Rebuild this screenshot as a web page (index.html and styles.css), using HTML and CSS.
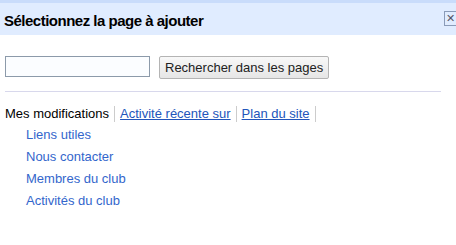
FILE: index.html
```html
<!DOCTYPE html>
<html lang="fr">
<head>
  <meta charset="UTF-8">
  <title>Sélectionnez la page à ajouter</title>
  <link rel="stylesheet" href="styles.css">
</head>
<body>
  <div class="dialog">
    <div class="dialog-header">
      <h2 class="dialog-title">Sélectionnez la page à ajouter</h2>
      <span class="close-button">&#x2715;</span>
    </div>
    <div class="search-row">
      <input type="text" class="search-input">
      <button class="btn">Rechercher dans les pages</button>
    </div>
    <div class="tabs">
      <span class="tab tab-current">Mes modifications</span>
      <a href="#" class="tab">Activité récente sur</a>
      <a href="#" class="tab">Plan du site</a>
    </div>
    <ul class="page-list">
      <li><a href="#">Liens utiles</a></li>
      <li><a href="#">Nous contacter</a></li>
      <li><a href="#">Membres du club</a></li>
      <li><a href="#">Activités du club</a></li>
    </ul>
  </div>
</body>
</html>
```
FILE: styles.css
```css
body {
  margin: 0;
  font-family: "Liberation Sans", Arial, sans-serif;
  background: #fff;
  overflow: hidden;
}

.dialog-header {
  display: flex;
  align-items: center;
  justify-content: space-between;
  height: 32px;
  background-color: #e0ecff;
  border-top: 3px solid #c9dcfb;
  padding-left: 4px;
}

.dialog-title {
  margin: 2px 0 0;
  font-size: 15px;
  letter-spacing: -0.5px;
  font-weight: bold;
  color: #000;
}

.close-button {
  width: 11px;
  height: 13px;
  border: 1px solid #8a9bb8;
  border-right: none;
  color: #556;
  font-size: 11px;
  line-height: 13px;
  text-align: center;
  margin-bottom: 2px;
  overflow: hidden;
}

.search-row {
  display: flex;
  align-items: center;
  gap: 9px;
  margin: 19px 15px 0 5px;
  padding-bottom: 12px;
  border-bottom: 1px solid #d8d8ec;
}

.search-input {
  width: 141px;
  height: 17px;
  margin: 0;
  padding: 1px;
  border: 1px solid #8c9aaa;
  background: #fbfdff;
}

.btn {
  height: 23px;
  margin: 2px 0 0;
  padding: 0 5px;
  font-family: "Liberation Sans", Arial, sans-serif;
  font-size: 13px;
  color: #222;
  background: linear-gradient(#f8f8f8, #e6e6e6);
  border: 1px solid #b4b4b4;
  border-radius: 2px;
}

.tabs {
  display: flex;
  margin: 14px 0 0 5px;
  font-size: 13px;
  line-height: 16px;
}

.tab {
  padding-right: 5px;
  margin-right: 5px;
  border-right: 1px solid #ccc;
  color: #2255bb;
}

.tab-current {
  color: #000;
}

.page-list {
  list-style: none;
  margin: 5px 0 0;
  padding-left: 26px;
  font-size: 13px;
}

.page-list li {
  height: 22px;
}

.page-list a {
  color: #3366cc;
  text-decoration: none;
}
```
